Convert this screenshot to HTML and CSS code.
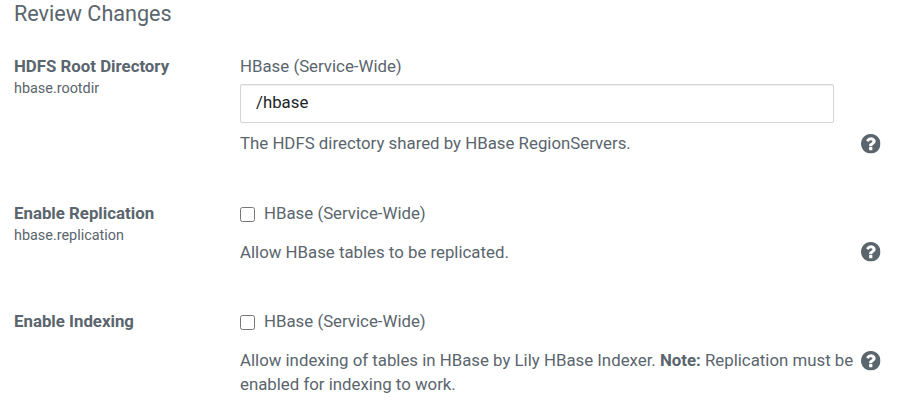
FILE: index.html
```html
<!DOCTYPE html>
<html lang="en">
<head>
<meta charset="utf-8">
<title>Review Changes</title>
<link rel="stylesheet" href="styles.css">
</head>
<body>
<main class="page">
<h1>Review Changes</h1>
<section class="row root">
<div class="label"><strong>HDFS Root Directory</strong><small>hbase.rootdir</small></div>
<div class="field">
<label class="scope" for="rootdir">HBase (Service-Wide)</label>
<input class="text" id="rootdir" type="text" value="/hbase">
<div class="desc"><p>The HDFS directory shared by HBase RegionServers.</p>
<svg class="help"><use href="#q"/></svg></div>
</div>
</section>
<section class="row replication">
<div class="label"><strong>Enable Replication</strong><small>hbase.replication</small></div>
<div class="field">
<label class="scope"><input class="check" type="checkbox">HBase (Service-Wide)</label>
<div class="desc"><p>Allow HBase tables to be replicated.</p>
<svg class="help"><use href="#q"/></svg></div>
</div>
</section>
<section class="row indexing">
<div class="label"><strong>Enable Indexing</strong></div>
<div class="field">
<label class="scope"><input class="check" type="checkbox">HBase (Service-Wide)</label>
<div class="desc"><p>Allow indexing of tables in HBase by Lily HBase Indexer. <b>Note:</b> Replication must be<br>enabled for indexing to work.</p>
<svg class="help"><use href="#q"/></svg></div>
</div>
</section>
</main>
<svg class="defs"><symbol id="q" viewBox="128 128 1536 1536"><path d="M1024 1376v-192q0-14-9-23t-23-9h-192q-14 0-23 9t-9 23v192q0 14 9 23t23 9h192q14 0 23-9t9-23zm256-672q0-88-55.500-163t-138.500-116-170-41q-243 0-371 213-15 24 8 42l132 100q7 6 19 6 16 0 25-12 53-68 86-92 34-24 86-24 48 0 85.500 26t37.500 59q0 38-20 61t-68 45q-63 28-115.500 86.500t-52.500 125.500v36q0 14 9 23t23 9h192q14 0 23-9t9-23q0-19 21.500-49.500t54.500-49.500q32-18 49-28.500t46-35 44.500-48 28-60.500 12.500-81zm384 192q0 209-103 385.500t-279.500 279.500-385.500 103-385.500-103-279.500-279.500-103-385.500 103-385.500 279.500-279.500 385.500-103 385.500 103 279.500 279.500 103 385.500z"/></symbol></svg>
</body>
</html>
```
FILE: styles.css
```css
* { box-sizing: border-box; }
body { margin: 0; background: #fff; color: #5a656d; font: 16.82px/24px Roboto, sans-serif; overflow: hidden; }
h1 { margin: 0; font-size: 21.6px; line-height: 28px; font-weight: 400; }
p { margin: 0; }
.page { padding: 0 14px; }
.row { display: grid; grid-template-columns: 226px 1fr; }
.root { margin-top: 26px; }
.replication { margin-top: 46px; }
.indexing { margin-top: 45px; }
.label strong, .label small { display: block; }
.label small { font-size: 14.4px; line-height: 22px; }
strong, b { font-weight: 700; }
.scope { display: flex; align-items: center; height: 24px; }
.text { display: block; width: 594px; height: 39px; margin: 6px 0 8px; padding: 0 15px 3px; border: 1px solid #d3d6d8; border-radius: 2px; box-shadow: inset 0 1px 1px rgba(0, 0, 0, .06); color: #1b2329; font: 16.8px Roboto, sans-serif; }
.check { width: 15px; height: 15px; margin: 2px 9px 0 0; }
.desc { display: flex; justify-content: space-between; align-items: flex-start; }
.replication .desc, .indexing .desc { margin-top: 15px; }
.desc p { white-space: nowrap; }
.help { width: 19.5px; height: 19.5px; margin: 3px 2.500px 0 0; flex: none; fill: #5a656d; }
.replication .help { margin-top: 2px; }
.defs { position: absolute; width: 0; height: 0; }
```
